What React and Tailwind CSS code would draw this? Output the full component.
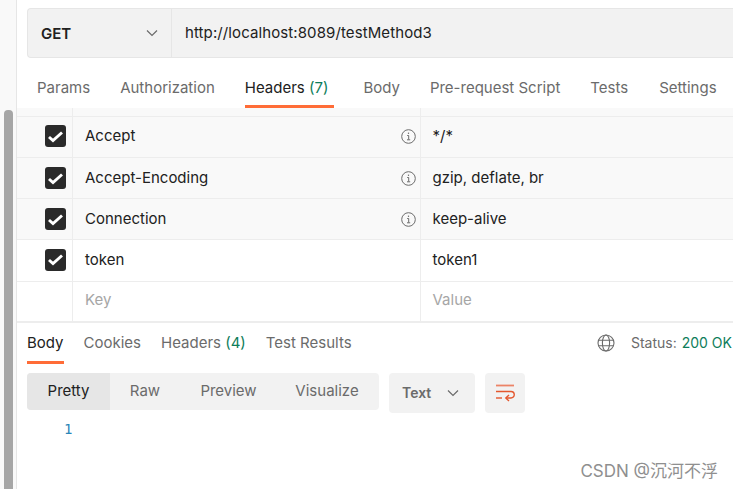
import React from "react";

const font = { fontFamily: "Inter, 'Noto Sans CJK SC', sans-serif" };

function Check() {
  return (
    <div className="w-[21px] h-[22px] rounded-[3px] bg-[#2a2a2a] flex items-center justify-center">
      <svg width="17" height="17" viewBox="0 0 17 17" fill="none">
        <path d="M2 9l4 3.6L15 4.5" stroke="#fff" strokeWidth="2.9" />
      </svg>
    </div>
  );
}

function Info() {
  return (
    <svg width="15" height="15" viewBox="0 0 15 15" fill="none" stroke="#6b6b6b">
      <circle cx="7.5" cy="7.5" r="6.8" strokeWidth="1" />
      <path d="M6.2 6.5h1.5v4M6 10.8h3.2" strokeWidth="1" />
      <path d="M7.5 3.6v1.3" strokeWidth="1.2" />
    </svg>
  );
}

function Chevron({ color = "#6b6b6b" }) {
  return (
    <svg width="12" height="8" viewBox="0 0 12 8" fill="none">
      <path d="M1 1.5l5 5 5-5" stroke={color} strokeWidth="1.2" />
    </svg>
  );
}

function Row({ name, value, info, bg, h, placeholder, pad = "pb-[2px]" }) {
  const text = placeholder ? "text-[#a6a6a6]" : "text-[#212121]";
  return (
    <div className={`flex border-b border-[#ededed] ${bg} ${h}`}>
      <div className={`w-[56px] shrink-0 flex items-center justify-end pr-[6px] border-r border-[#ededed] ${pad}`}>
        {!placeholder && <Check />}
      </div>
      <div className={`w-[348px] shrink-0 flex items-center justify-between pl-3 pr-[4px] border-r border-[#ededed] ${text} ${pad}`}>
        <span>{name}</span>
        {info && <Info />}
      </div>
      <div className={`flex-1 flex items-center pl-[11.5px] ${text} ${pad}`}>{value}</div>
    </div>
  );
}

function Tab({ children, count, active, className = "" }) {
  return (
    <div className={`relative ${active ? "text-[#212121]" : "text-[#6b6b6b]"} ${className}`}>
      {children}
      {count && <span className="text-[#0d7d5a]"> {count}</span>}
    </div>
  );
}

export default function App() {
  return (
    <div style={font} className="w-[733px] h-[489px] overflow-hidden flex bg-white text-[15px] leading-[22px]">
      <div className="w-[17px] shrink-0 bg-[#f9f9f9] border-r border-[#e6e6e6] pt-[110px] pl-[4px]">
        <div className="w-[9px] h-[379px] bg-[#a6a6a6] rounded-t-[4px]" />
      </div>
      <div className="flex-1 min-w-0 flex flex-col">
        <div className="pt-[8px] pl-[10px] h-[66px]">
          <div className="h-[50px] flex bg-[#f2f2f2] border border-[#e6e6e6] border-r-0 rounded-l-[4px]">
            <div className="w-[144px] shrink-0 flex items-center justify-between pl-[13px] pr-[13px] border-r border-[#e6e6e6]">
              <span className="font-semibold text-[#212121] pt-[1px]">GET</span>
              <Chevron />
            </div>
            <div className="flex-1 flex items-center pl-[13px] text-[#212121] tracking-[0.1px]">http://localhost:8089/testMethod3</div>
          </div>
        </div>
        <div className="h-[42px] flex items-start pl-[20px] gap-[30px] whitespace-nowrap pt-[11px]">
          <Tab>Params</Tab>
          <Tab>Authorization</Tab>
          <Tab active count="(7)" className="pr-[5px]">
            Headers
            <div className="absolute left-0 right-[-1px] top-[28px] h-[3px] bg-[#ff6c37]" />
          </Tab>
          <Tab>Body</Tab>
          <Tab>Pre-request Script</Tab>
          <Tab>Tests</Tab>
          <Tab className="ml-[1px]">Settings</Tab>
        </div>
        <div className="h-[9px] flex border-b border-[#ededed] bg-[#f9f9f9]">
          <div className="w-[56px] border-r border-[#ededed]" />
          <div className="w-[348px] border-r border-[#ededed]" />
        </div>
        <Row name="Accept" value="*/*" info bg="bg-[#f9f9f9]" h="h-[41px]" />
        <Row name="Accept-Encoding" value="gzip, deflate, br" info bg="bg-[#f9f9f9]" h="h-[41px]" pad="pb-[0px]" />
        <Row name="Connection" value="keep-alive" info bg="bg-[#f9f9f9]" h="h-[41px]" pad="pb-[0px]" />
        <Row name="token" value="token1" bg="bg-white" h="h-[42px]" />
        <Row name="Key" value="Value" placeholder bg="bg-white" h="h-[40px]" pad="pb-[4px]" />
        <div className="h-[1px] bg-[#ededed]" />
        <div className="h-[50px] flex pl-[10px] pr-[1px] items-start pt-[9px] whitespace-nowrap">
          <div className="flex gap-[20px]">
            <Tab active>
              Body
              <div className="absolute left-0 right-0 top-[29px] h-[3px] bg-[#ff6c37]" />
            </Tab>
            <Tab>Cookies</Tab>
            <Tab count="(4)">Headers</Tab>
            <Tab>Test Results</Tab>
          </div>
          <div className="ml-auto flex items-center text-[14px] text-[#6b6b6b]">
            <svg width="18" height="18" viewBox="0 0 18 18" fill="none" stroke="#6b6b6b" strokeWidth="1.1" className="mr-[16px]">
              <circle cx="9" cy="9" r="8" />
              <ellipse cx="9" cy="9" rx="3.6" ry="8" />
              <path d="M1.6 6.3h14.8M1.6 11.7h14.8" />
            </svg>
            <span>Status:</span>
            <span className="ml-[5px] text-[#0d7d5a]">200 OK</span>
          </div>
        </div>
        <div className="flex pl-[10px] gap-[10px] items-start">
          <div className="flex h-[37px] w-[352px] rounded-[4px] bg-[#f2f2f2] text-[#6b6b6b] items-center pb-[0px]">
            <div className="w-[83px] h-full flex items-center justify-center bg-[#e6e6e6] text-[#212121] rounded-l-[4px] pb-[2px]">Pretty</div>
            <div className="w-[70px] text-center pb-[2px]">Raw</div>
            <div className="w-[97px] text-center pb-[2px]">Preview</div>
            <div className="flex-1 text-center pr-[2px] pb-[2px]">Visualize</div>
          </div>
          <div className="w-[86px] h-[40px] rounded-[4px] bg-[#f2f2f2] flex items-center justify-between pl-[13px] pr-[16px] pb-[1px] text-[14px] font-semibold text-[#6b6b6b]">
            <span>Text</span>
            <Chevron />
          </div>
          <div className="w-[40px] h-[40px] rounded-[4px] bg-[#f2f2f2] flex items-center justify-center">
            <svg width="20" height="19" viewBox="0 0 20 19" fill="none" stroke="#e4572e" strokeWidth="1.4">
              <path d="M1 1.5h18" stroke="#ec8467" strokeWidth="1.8" />
              <path d="M1 7.5h15a2.8 2.8 0 010 6.5H11" />
              <path d="M1 14h6" />
              <path d="M14 11l-3.2 3 3.2 3" />
            </svg>
          </div>
        </div>
        <div className="pl-[47px] mt-[6px] h-[20px] leading-[20px] text-[#2a86b8] text-[14px]" style={{ fontFamily: "'DejaVu Sans Mono', monospace" }}>1</div>
        <div className="flex justify-end pr-[15px] mt-[21px] text-[17px] text-[#8f8f8f] leading-[22px] whitespace-nowrap">CSDN @沉河不浮</div>
      </div>
    </div>
  );
}
